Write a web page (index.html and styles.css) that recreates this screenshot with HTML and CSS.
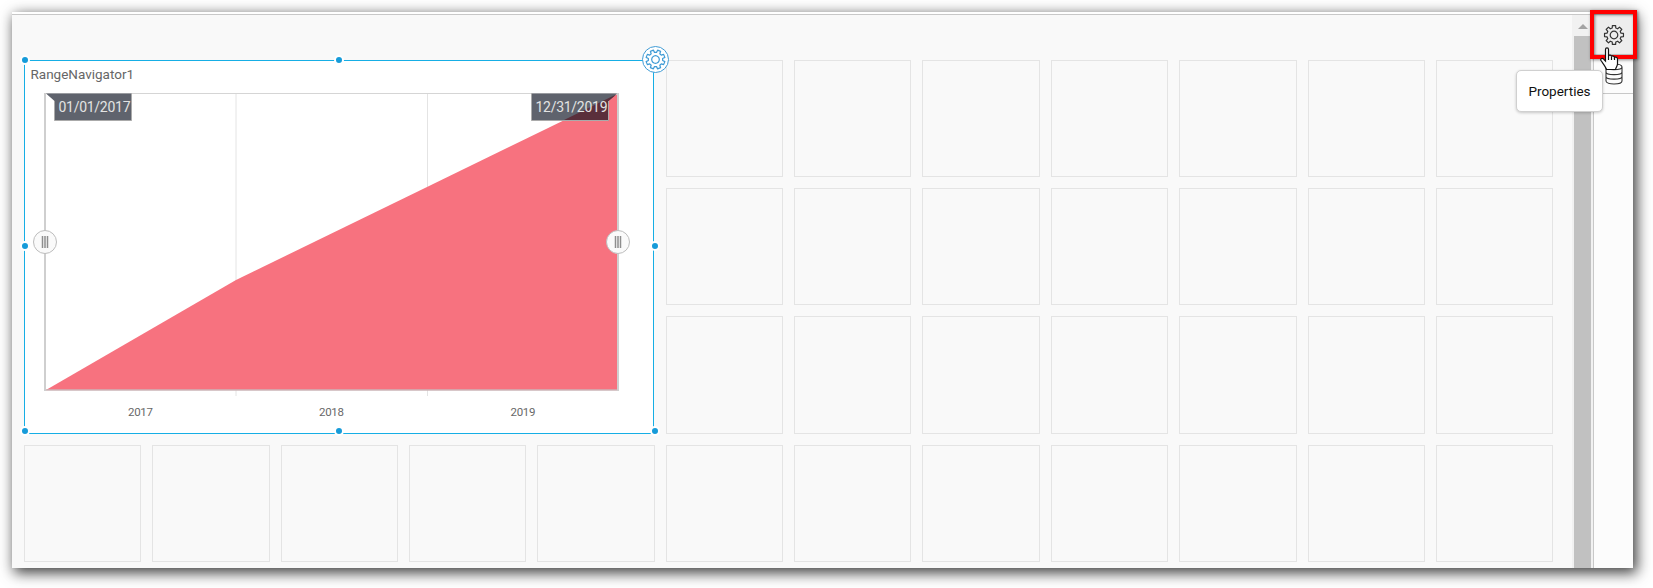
FILE: index.html
```html
<!DOCTYPE html>
<html lang="en">
<head>
<meta charset="utf-8">
<title>Dashboard designer</title>
<link rel="stylesheet" href="styles.css">
</head>
<body>
<div class="window">
  <main class="canvas">
    <div class="grid" id="grid">
      <section class="widget">
        <h2 class="widget-title">RangeNavigator1</h2>
        <svg class="chart" width="628" height="352" viewBox="25 81 628 352">
          <path d="M236 94V396M427.500 94V396" stroke="#e4e4e4"/>
          <path d="M46 93.500H618" stroke="#d5d5d5"/>
          <path d="M46 390L236 280L427 187L618 94V390Z" fill="#f7727f"/>
          <path d="M45 390H618" stroke="#cbb5b7" stroke-width="1.500"/>
          <path d="M45 93V391M618 93V391" stroke="#cfcfcf" stroke-width="2"/>
          <path d="M46 93.500H131.500V120.500H54.500V101Z" fill="#5f636d"/>
          <path d="M54.500 101V120.500H131.500V93.500" fill="none" stroke="#aaa"/>
          <path d="M531.500 93.500H617L608.500 101V120.500H531.500Z" fill="#5f636d"/>
          <path d="M563 120.500L617 94L608.500 101V120.500Z" fill="#5a2f3b"/>
          <path d="M531.500 93.500V120.500H608.500V101" fill="none" stroke="#aaa"/>
          <g class="flag"><text x="58.500" y="112" textLength="72">01/01/2017</text><text x="535.500" y="112" textLength="72">12/31/2019</text></g>
          <g class="years"><text x="140.500" y="416" textLength="25">2017</text><text x="331.500" y="416" textLength="25">2018</text><text x="523" y="416" textLength="25">2019</text></g>
          <g fill="#fafafa" stroke="#bdbdbd"><circle cx="45" cy="242" r="11.500"/><circle cx="618" cy="242" r="11.500"/></g>
          <path d="M42.500 236V248M45 236V248M47.500 236V248M615.500 236V248M618 236V248M620.500 236V248" stroke="#8e8e8e" stroke-width="1.500"/>
        </svg>
        <i class="dot n w"></i><i class="dot n c"></i>
        <i class="dot m w"></i><i class="dot m e"></i>
        <i class="dot s w"></i><i class="dot s c"></i><i class="dot s e"></i>
        <span class="settings"><svg width="23" height="23" viewBox="-11.500 -11.500 23 23"><g class="gear" transform="rotate(22.500)"></g></svg></span>
      </section>
    </div>
  </main>
  <div class="scrollbar"><div class="arrow"></div><div class="thumb"></div></div>
  <aside class="rail">
    <div class="tab active"><svg width="22" height="22" viewBox="-11 -11 22 22"><g class="gear"></g></svg></div>
    <div class="tab"><svg width="18" height="22" viewBox="0 0 18 22"><path class="db" d="M1 4C1 0 17 0 17 4V18C17 22 1 22 1 18ZM1 4C1 7.500 17 7.500 17 4M1 9C1 12.500 17 12.500 17 9M1 13.500C1 17 17 17 17 13.500"/></svg></div>
  </aside>
</div>
<div class="highlight"></div>
<div class="tooltip">Properties</div>
<svg class="cursor" width="19" height="24" viewBox="0 0 19 24"><path d="M5.500 14V2.500C5.500 .3 8.500 .3 8.500 2.500V9C9 7.500 11.500 8 11.500 9.500C12 8.500 14.500 9 14.500 10.500C15.500 9.500 17.500 10.500 17.500 12V17C17.500 19 16 20 15.500 22.500H6.500C6 20 2.500 16 1 13.500C0 11.500 2.500 10.500 4 12.500Z"/><path d="M8.500 9V13M11.500 9.500V13M14.500 10.500V13"/></svg>
<script src="app.js"></script>
</body>
</html>
```
FILE: styles.css
```css
* { box-sizing: border-box; }
body { margin: 0; padding: 12px 20px 20px 12px; height: 588px; background: #fff; overflow: hidden; font-family: Roboto, sans-serif; }
.window { display: flex; height: 556px; width: 1621px; border-top: 2px solid #fff; background: #f9f9f9; box-shadow: 3px 4px 13px 1px rgba(0,0,0,.75); }
.canvas { flex: 1; border-top: 1px solid #c8c8c8; padding: 44.6px 17px 6px 11.72px; }
.grid { display: grid; grid-template-columns: repeat(12, 117.4px); grid-template-rows: repeat(4, 117.3px); gap: 11.1px 11px; }
.cell { border: 1px solid #e4e4e4; }
.widget { grid-area: 1 / 1 / 4 / 6; position: relative; margin: .4px 0 0 .28px; border: 1px solid #16aee5; background: #fff; height: 374px; width: 630px; }
.widget-title { margin: 0; height: 20px; padding: 4px 0 0 5.5px; font-weight: 400; font-size: 13.5px; line-height: 18px; color: #666; }
.chart { display: block; }
.flag { font: 14px Roboto, sans-serif; fill: #e3e3e3; }
.years { font: 11.5px Roboto, sans-serif; fill: #686868; text-anchor: middle; }
.dot { position: absolute; width: 10px; height: 10px; border: 2px solid #fff; border-radius: 50%; background: #169bd9; }
.n { top: -6px; } .m { top: 180px; } .s { top: 365px; }
.w { left: -5px; } .c { left: 309px; } .e { left: 625px; }
.settings { position: absolute; left: 617px; top: -15px; width: 27px; height: 27px; border: 1px solid #3f9bd5; border-radius: 50%; background: #fff; display: grid; place-items: center; }
.gear { fill: none; stroke: #333; stroke-width: 1.2; stroke-linejoin: round; }
.settings .gear { stroke: #3f9bd5; }
.scrollbar { width: 21px; background: #f1f1f1; border-top: 1px solid #c8c8c8; display: flex; flex-direction: column; align-items: center; }
.arrow { margin: 9px 0 7px; border: 5px solid transparent; border-top: 0; border-bottom-color: #a3a3a3; }
.thumb { flex: 1; width: 17px; background: #c1c1c1; }
.rail { width: 40px; border-top: 1px solid #c8c8c8; border-left: 1px solid #c8c8c8; background: #fcfcfc; }
.tab { height: 39px; display: grid; place-items: center; border-bottom: 1px solid #c8c8c8; }
.tab.active { height: 40px; background: #ededed; }
.db { fill: none; stroke: #333; stroke-width: 1.1; }
.highlight { position: absolute; left: 1590px; top: 10px; width: 47px; height: 49px; border: 4px solid #f00; box-shadow: 1px 1px 3px rgba(0,0,0,.45), inset 1px 1px 3px rgba(0,0,0,.45); }
.tooltip { position: absolute; left: 1516px; top: 70px; width: 87px; height: 42px; border: 1px solid #d0d0d0; border-radius: 5px; background: #fff; color: #111; font-size: 13.5px; line-height: 41px; text-align: center; box-shadow: 0 1px 3px rgba(0,0,0,.2); }
.cursor { position: absolute; left: 1600px; top: 47px; fill: #fff; stroke: #111; stroke-width: 1.2; }
```
FILE: app.js
```js
const grid = document.getElementById('grid');
for (let r = 1; r <= 4; r++) {
  for (let c = r < 4 ? 6 : 1; c <= 12; c++) {
    const cell = document.createElement('div');
    cell.className = 'cell';
    cell.style.gridArea = `${r} / ${c}`;
    grid.appendChild(cell);
  }
}

// Cog outline with eight teeth and a round hub.
const points = [];
for (let i = 0; i < 8; i++) {
  [[-0.25, 7.2], [-0.17, 9.6], [0.17, 9.6], [0.25, 7.2]].forEach(([d, radius]) => {
    const a = i * Math.PI / 4 + d;
    points.push((radius * Math.sin(a)).toFixed(2) + ' ' + (-radius * Math.cos(a)).toFixed(2));
  });
}
document.querySelectorAll('.gear').forEach(g => {
  g.innerHTML = `<path d="M${points.join('L')}Z"/><circle r="3.8"/>`;
});
```
